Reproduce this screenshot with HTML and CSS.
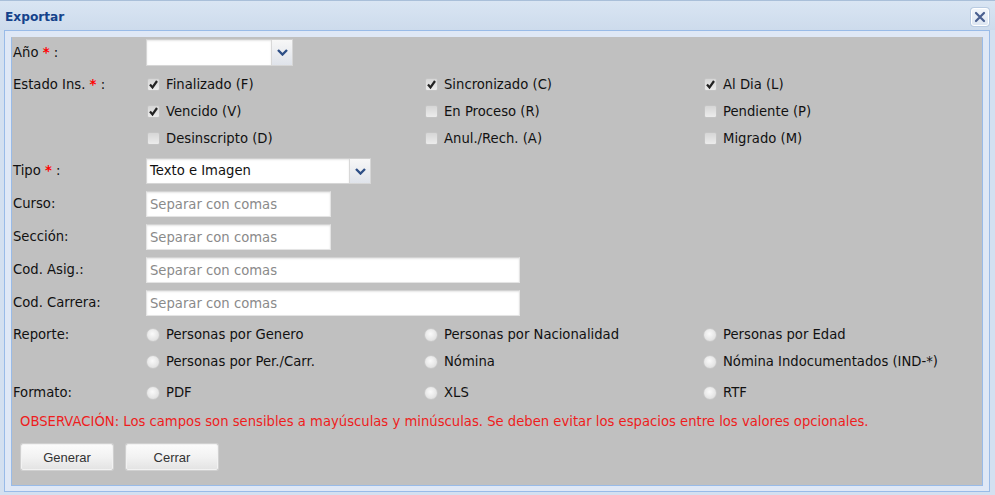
FILE: index.html
```html
<!DOCTYPE html>
<html lang="es">
<head>
<meta charset="utf-8">
<title>Exportar</title>
<link rel="stylesheet" href="styles.css">
</head>
<body>
<div class="window">
  <div class="header">
    <span class="title">Exportar</span>
    <span class="close"><svg width="12" height="12" viewBox="0 0 12 12"><path d="M2 2 L10 10 M10 2 L2 10" stroke="#4a5f8f" stroke-width="2.2" stroke-linecap="round"/></svg></span>
  </div>
  <div class="body">
    <div class="panel">
      <div class="row r-anio">
        <div class="label">Año <span class="req">*</span> :</div>
        <div class="combo w-anio"><div class="combo-val"></div><div class="trigger"><svg width="11" height="7" viewBox="0 0 11 7"><path d="M1 1 L5.5 5.5 L10 1" fill="none" stroke="#2e4f86" stroke-width="2.4"/></svg></div></div>
      </div>
      <div class="row r-estado">
        <div class="label">Estado Ins. <span class="req">*</span> :</div>
        <div class="opts">
          <div class="opt"><span class="cb on"><svg width="11" height="11" viewBox="0 0 11 11"><path d="M2 5.5 L4.5 8.5 L9 2" fill="none" stroke="#222" stroke-width="2.2"/></svg></span>Finalizado (F)</div>
          <div class="opt"><span class="cb on"><svg width="11" height="11" viewBox="0 0 11 11"><path d="M2 5.5 L4.5 8.5 L9 2" fill="none" stroke="#222" stroke-width="2.2"/></svg></span>Sincronizado (C)</div>
          <div class="opt"><span class="cb on"><svg width="11" height="11" viewBox="0 0 11 11"><path d="M2 5.5 L4.5 8.5 L9 2" fill="none" stroke="#222" stroke-width="2.2"/></svg></span>Al Dia (L)</div>
          <div class="opt"><span class="cb on"><svg width="11" height="11" viewBox="0 0 11 11"><path d="M2 5.5 L4.5 8.5 L9 2" fill="none" stroke="#222" stroke-width="2.2"/></svg></span>Vencido (V)</div>
          <div class="opt"><span class="cb"></span>En Proceso (R)</div>
          <div class="opt"><span class="cb"></span>Pendiente (P)</div>
          <div class="opt"><span class="cb"></span>Desinscripto (D)</div>
          <div class="opt"><span class="cb"></span>Anul./Rech. (A)</div>
          <div class="opt"><span class="cb"></span>Migrado (M)</div>
        </div>
      </div>
      <div class="row r-field">
        <div class="label">Tipo <span class="req">*</span> :</div>
        <div class="combo w-tipo"><div class="combo-val">Texto e Imagen</div><div class="trigger"><svg width="11" height="7" viewBox="0 0 11 7"><path d="M1 1 L5.5 5.5 L10 1" fill="none" stroke="#2e4f86" stroke-width="2.4"/></svg></div></div>
      </div>
      <div class="row r-field">
        <div class="label">Curso:</div>
        <input class="txt w-short" type="text" placeholder="Separar con comas">
      </div>
      <div class="row r-field">
        <div class="label">Sección:</div>
        <input class="txt w-short" type="text" placeholder="Separar con comas">
      </div>
      <div class="row r-field">
        <div class="label">Cod. Asig.:</div>
        <input class="txt w-long" type="text" placeholder="Separar con comas">
      </div>
      <div class="row r-field">
        <div class="label">Cod. Carrera:</div>
        <input class="txt w-long" type="text" placeholder="Separar con comas">
      </div>
      <div class="row r-reporte">
        <div class="label">Reporte:</div>
        <div class="opts">
          <div class="opt"><span class="rd"></span>Personas por Genero</div>
          <div class="opt"><span class="rd"></span>Personas por Nacionalidad</div>
          <div class="opt"><span class="rd"></span>Personas por Edad</div>
          <div class="opt"><span class="rd"></span>Personas por Per./Carr.</div>
          <div class="opt"><span class="rd"></span>Nómina</div>
          <div class="opt"><span class="rd"></span>Nómina Indocumentados (IND-*)</div>
        </div>
      </div>
      <div class="row r-formato">
        <div class="label">Formato:</div>
        <div class="opts">
          <div class="opt"><span class="rd"></span>PDF</div>
          <div class="opt"><span class="rd"></span>XLS</div>
          <div class="opt"><span class="rd"></span>RTF</div>
        </div>
      </div>
      <div class="obs">OBSERVACIÓN: Los campos son sensibles a mayúsculas y minúsculas. Se deben evitar los espacios entre los valores opcionales.</div>
      <div class="buttons">
        <button class="btn" type="button">Generar</button>
        <button class="btn" type="button">Cerrar</button>
      </div>
    </div>
  </div>
</div>
</body>
</html>
```

FILE: styles.css
```css
* { box-sizing: border-box; }
html, body { margin: 0; padding: 0; }
body {
  width: 995px;
  height: 495px;
  overflow: hidden;
  font-family: "DejaVu Sans", sans-serif;
  font-size: 13.2px;
  color: #111;
  background: #d3e0f0;
}
.window {
  width: 995px;
  height: 495px;
  display: flex;
  flex-direction: column;
  background: #d3e0f0;
  border-top: 1px solid #a9bfd9;
}
.header {
  height: 29px;
  display: flex;
  align-items: center;
  justify-content: space-between;
  padding: 0 5px 0 5px;
  background: linear-gradient(#d9e5f3, #cddbec);
}
.title {
  font-weight: bold;
  font-size: 12.2px;
  color: #15428b;
  margin-top: 3px;
}
.close {
  width: 18px;
  height: 18px;
  margin-top: 2px;
  margin-right: 1px;
  display: flex;
  align-items: center;
  justify-content: center;
  border: 1px solid #fff;
  border-radius: 3px;
  background: linear-gradient(#f2f6fb, #dde6f2);
  box-shadow: 0 0 0 1px #b9cbe2;
}
.body {
  margin: 0 5px 0 4px;
  height: 462px;
  border: 1px solid #99bbe8;
  background: #dfe8f6;
  padding: 6px 6px 5px 6px;
}
.panel {
  height: 100%;
  background: #c0c0c0;
  border: 1px solid #99bbe8;
  border-top-color: #c0c0c0;
  padding: 1px 0 0 1px;
  display: flex;
  flex-direction: column;
}
.row {
  display: grid;
  grid-template-columns: 133px 1fr;
  align-items: start;
}
.label {
  height: 27px;
  line-height: 27px;
  white-space: nowrap;
}
.req { color: #f00; font-weight: bold; }
.r-anio { height: 27px; }
.r-estado { margin-top: 5px; }
.r-field { margin-top: 6px; }
.r-field .label { height: 26px; line-height: 26px; }
.r-field + .r-field { margin-top: 7px; }
.r-reporte { margin-top: 5px; }
.r-formato { margin-top: 4px; }

.opts {
  display: grid;
  grid-template-columns: 278px 279px 1fr;
}
.opt {
  height: 27px;
  display: flex;
  align-items: center;
  white-space: nowrap;
}
.cb {
  width: 13px;
  height: 13px;
  margin: 0 6px 0 1px;
  border: 1px solid #c4c4c4;
  border-radius: 2px;
  background: linear-gradient(#d6d6d6, #ececec);
  display: flex;
  align-items: center;
  justify-content: center;
}
.rd {
  width: 14px;
  height: 14px;
  margin: 0 6px 0 0;
  border-radius: 50%;
  border: 1px solid #c8c8c8;
  background: radial-gradient(circle at 45% 40%, #fafafa, #d8d8d8);
}

.combo {
  height: 27px;
  display: flex;
  background: #fff;
  border: 1px solid #d6d6d6;
  border-top-color: #cfcfcf;
}
.w-anio { width: 147px; }
.w-tipo { width: 225px; height: 26px; }
.combo-val {
  flex: 1;
  padding-left: 3px;
  line-height: 24px;
  box-shadow: inset 0 1px 2px rgba(0,0,0,0.10);
}
.trigger {
  width: 21px;
  border-left: 1px solid #d8d8d8;
  background: linear-gradient(#f7f7f7, #dfe3ea);
  display: flex;
  align-items: center;
  justify-content: center;
}
.txt {
  height: 26px;
  padding: 0 0 0 3px;
  border: 1px solid #e4e4e4;
  border-top-color: #d2d2d2;
  background: #fff;
  box-shadow: inset 0 1px 2px rgba(0,0,0,0.10);
  font-family: "DejaVu Sans", sans-serif;
  font-size: 13.2px;
  color: #111;
  outline: none;
}
.txt::placeholder { color: #8a8a8a; }
.w-short { width: 185px; }
.w-long { width: 374px; }

.obs {
  margin-top: 5px;
  height: 22px;
  line-height: 22px;
  padding-left: 7px;
  color: #ee1d1d;
  white-space: nowrap;
}
.buttons {
  margin-top: 11px;
  padding-left: 8px;
  display: flex;
  gap: 13px;
}
.btn {
  width: 92px;
  height: 26px;
  padding: 0;
  font-family: "Liberation Sans", Arial, sans-serif;
  font-size: 13px;
  color: #333;
  border: 1px solid #f2f2f2;
  border-radius: 2px;
  background: linear-gradient(#fbfbfb, #f2f2f2 50%, #e4e4e4);
  box-shadow: 0 0 0 1px #d0d0d0;
}
```
